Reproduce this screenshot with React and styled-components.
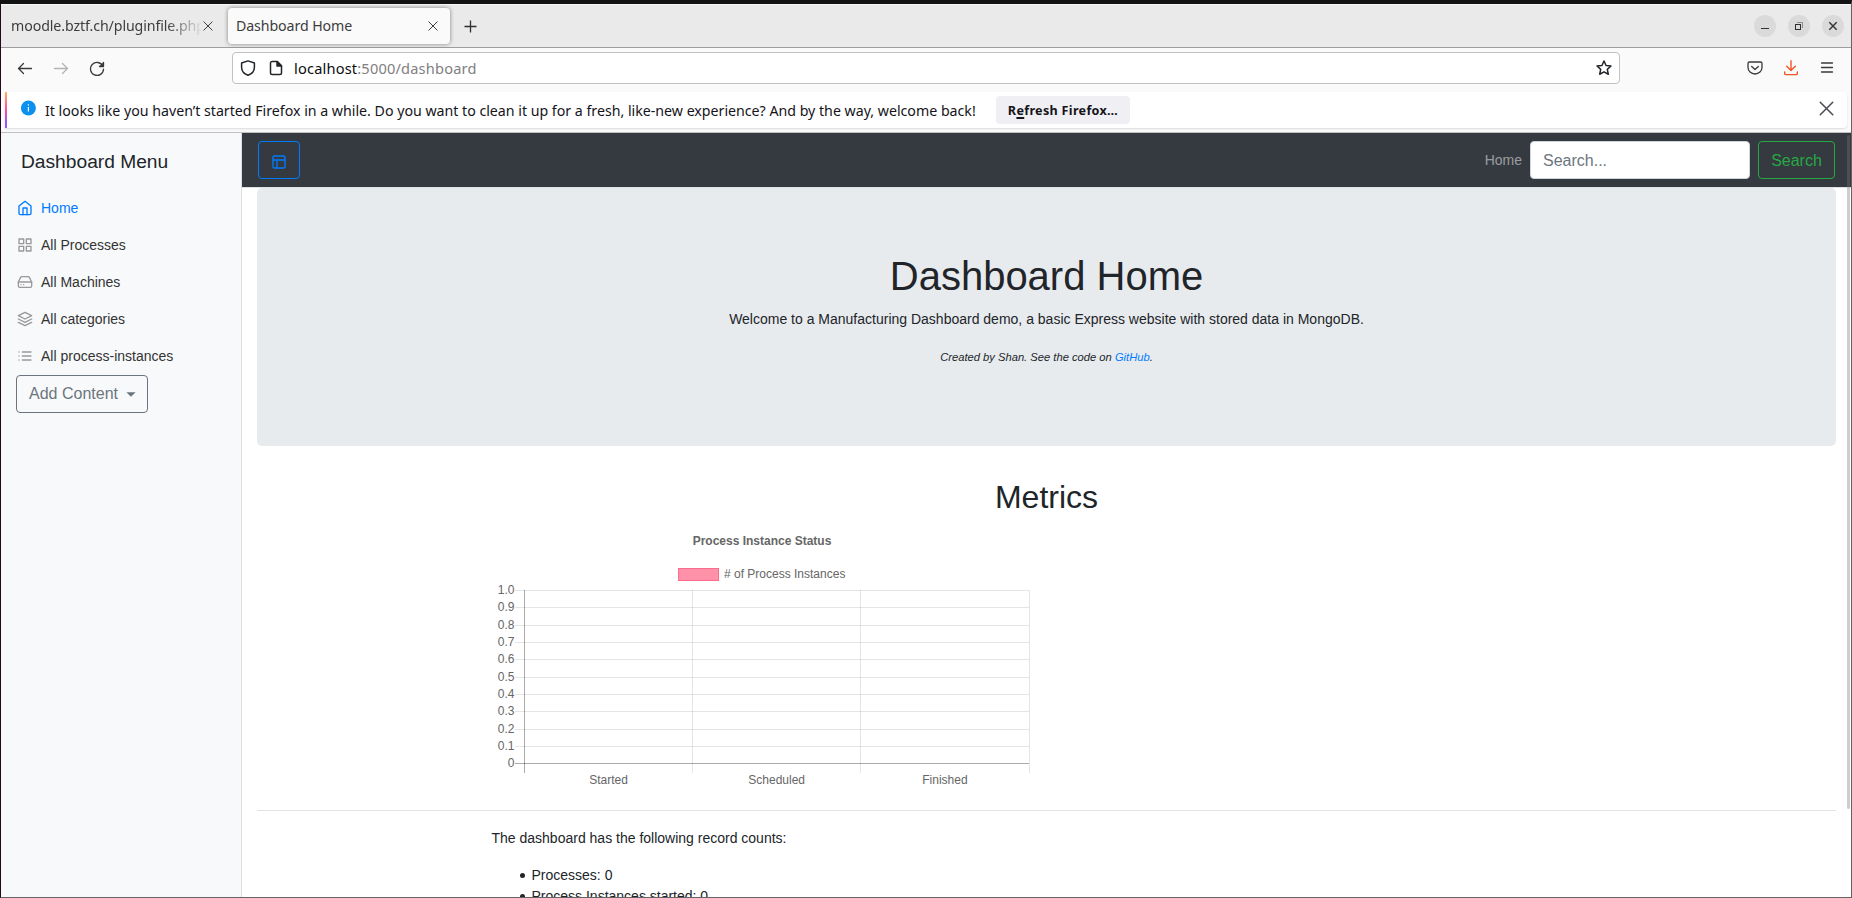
import React from "react";
import styled, { createGlobalStyle } from "styled-components";

const GlobalStyle = createGlobalStyle`
  *, *::before, *::after { box-sizing: border-box; }
  html, body { margin: 0; padding: 0; overflow: hidden; }
  body {
    font-family: "Liberation Sans", Arial, sans-serif;
    font-size: 14px;
    line-height: 1.5;
    color: #212529;
    background: #fff;
  }
`;

const uiFont = `"Noto Sans", "Open Sans", sans-serif`;

/* ---------- browser window ---------- */

const Window = styled.div`
  width: 1852px;
  height: 898px;
  overflow: hidden;
  display: flex;
  flex-direction: column;
  border-top: 4px solid #131313;
  border-left: 1px solid #1d0a1c;
  border-right: 1px solid #666365;
  border-bottom: 1px solid #666365;
`;

const TabBar = styled.div`
  flex: none;
  height: 44px;
  display: flex;
  align-items: center;
  background: #eaeaea;
  border-top: 1px solid #f8f8f8;
  border-bottom: 1px solid #9d9d9f;
  font-family: ${uiFont};
  color: #3d3d3d;
`;

const Tab = styled.div`
  display: flex;
  align-items: center;
  justify-content: space-between;
  height: 36px;
  width: ${(p) => p.$width}px;
  padding: 0 ${(p) => p.$right}px 0 ${(p) => p.$left}px;
  margin-right: ${(p) => p.$gap}px;
  border-radius: 4px;
  background: ${(p) => (p.$active ? "#fafafa" : "transparent")};
  box-shadow: ${(p) => (p.$active ? "0 0 4px rgba(0,0,0,.45)" : "none")};
`;

const TabTitle = styled.span`
  font-size: 14.2px;
  letter-spacing: ${(p) => p.$spacing || 0}px;
  white-space: nowrap;
  overflow: hidden;
  width: ${(p) => p.$width}px;
  ${(p) => p.$fade && "mask-image: linear-gradient(to right, #000 155px, transparent 192px);"}
`;

const WindowControls = styled.div`
  margin-left: auto;
  margin-right: 7px;
  display: flex;
  gap: 12px;
`;

const WindowButton = styled.span`
  width: 22px;
  height: 22px;
  border-radius: 50%;
  background: #dadada;
  display: flex;
`;

const NavBar = styled.div`
  flex: none;
  height: 44px;
  display: flex;
  align-items: center;
  padding: 0 16px 4px 16px;
  background: #fafafa;
  font-family: ${uiFont};
`;

const NavButtons = styled.div`
  display: flex;
  gap: 20px;
  width: 215px;
  color: #3a3a3a;
`;

const UrlField = styled.div`
  width: 1388px;
  height: 32px;
  display: flex;
  align-items: center;
  padding: 0 7px;
  background: #fff;
  border: 1px solid #c2c2c4;
  border-radius: 4px;
`;

const UrlIcons = styled.span`
  display: flex;
  gap: 12px;
`;

const UrlText = styled.span`
  flex: 1;
  margin-left: 10px;
  padding-top: 1px;
  font-size: 14.6px;
  letter-spacing: ${(p) => p.$spacing}px;
  color: #808080;
  b { font-weight: 400; color: #0c0c0d; }
`;

const NavTools = styled.div`
  margin-left: auto;
  display: flex;
  gap: 20px;
  color: #3a3a3a;
`;

const NoticeArea = styled.div`
  flex: none;
  height: 41px;
  padding: 0 4px 4px;
  background: #fafafa;
  border-bottom: 1px solid #bfbfbf;
`;

const Notice = styled.div`
  position: relative;
  height: 36px;
  display: flex;
  align-items: center;
  padding-left: 15px;
  padding-right: 13px;
  overflow: hidden;
  background: #fff;
  border-radius: 0 4px 4px 0;
  box-shadow: 0 1px 2px rgba(58, 57, 68, 0.15);
  font-family: ${uiFont};
  color: #15141a;
  &::before {
    content: "";
    position: absolute;
    left: 0;
    top: 0;
    bottom: 0;
    width: 2px;
    background: linear-gradient(#ffb055, #ff4aa2 50%, #9059ff 85%);
  }
`;

const InfoBadge = styled.span`
  display: flex;
  margin-top: -4px;
  margin-right: 9px;
`;

const NoticeText = styled.span`
  width: 951px;
  padding-top: 1px;
  font-size: 14.2px;
  letter-spacing: ${(p) => p.$spacing}px;
  white-space: nowrap;
`;

const NoticeButton = styled.button`
  height: 28px;
  width: 134px;
  padding: 0;
  border: 0;
  border-radius: 4px;
  background: #f0f0f4;
  color: #15141a;
  font: 700 12.6px ${uiFont};
  letter-spacing: ${(p) => p.$spacing}px;
  u { text-decoration-thickness: 2px; text-underline-offset: 2px; text-decoration-skip-ink: none; }
`;

const CloseNotice = styled.span`
  display: flex;
  margin-left: auto;
  margin-top: -4px;
`;

/* ---------- page ---------- */

const Page = styled.div`
  position: relative;
  flex: 1;
  min-height: 0;
  display: flex;
  overflow: hidden;
`;

const ScrollThumb = styled.div`
  position: absolute;
  right: 1px;
  top: 2px;
  width: 3px;
  height: 674px;
  border-radius: 2px;
  background: rgba(120, 120, 120, 0.37);
`;

const Sidebar = styled.aside`
  flex: none;
  width: 241px;
  background: #f8f9fb;
  border-right: 1px solid #dddde4;
`;

const Brand = styled.div`
  height: 57px;
  padding: 14px 20px 0;
  font-size: 19.2px;
  line-height: 29px;
`;

const SideLink = styled.a`
  display: flex;
  align-items: center;
  height: 37px;
  padding: 0 16px;
  gap: 8px;
  color: ${(p) => (p.$active ? "#007bff" : "#333")};
  svg {
    color: ${(p) => (p.$active ? "#007bff" : "#999")};
    margin-bottom: 1px;
  }
`;

const Button = styled.button`
  display: inline-flex;
  align-items: center;
  justify-content: center;
  height: 38px;
  width: ${(p) => p.$width}px;
  padding: ${(p) => p.$drop || 0}px 0 0;
  border: 1px solid ${(p) => p.$color};
  border-radius: 4px;
  background: transparent;
  color: ${(p) => p.$color};
  font: 16px "Liberation Sans", Arial, sans-serif;
`;

const AddButton = styled(Button)`
  margin-left: 15px;
  padding-left: 1px;
`;

const Caret = styled.span`
  margin-left: 8px;
  border-top: 5px solid;
  border-left: 5px solid transparent;
  border-right: 5px solid transparent;
  transform: scale(0.92);
`;

const Main = styled.main`
  flex: 1;
  min-width: 0;
`;

const TopNav = styled.nav`
  height: 55px;
  display: flex;
  align-items: center;
  padding: 0 16px;
  background: #343a40;
  border-bottom: 1px solid #dee2e6;
`;

const TopLink = styled.a`
  margin-left: auto;
  margin-right: 8px;
  color: rgba(255, 255, 255, 0.5);
`;

const SearchInput = styled.input`
  width: 220px;
  height: 38px;
  margin-right: 8px;
  padding: 7px 12px 6px;
  border: 1px solid #ced4da;
  border-radius: 4px;
  font: 16px "Liberation Sans", Arial, sans-serif;
  &::placeholder { color: #6c757d; opacity: 1; }
`;

const Content = styled.div`
  padding: 0 15px;
`;

const Jumbotron = styled.section`
  height: 258px;
  padding: 64px 32px;
  margin-bottom: 32px;
  border-radius: 5px;
  background: #e8ebee;
  text-align: center;
`;

const Title = styled.h1`
  margin: 0 0 9px;
  font-size: 40px;
  font-weight: 400;
  line-height: 48px;
`;

const Text = styled.p`
  margin: 0 0 16px;
`;

const Credit = styled.em`
  font-size: 11.2px;
  a { color: #007bff; }
`;

const SectionTitle = styled.h2`
  margin: 0 0 8px;
  font-size: 32px;
  font-weight: 400;
  line-height: 39px;
  text-align: center;
`;

const Column = styled.div`
  margin-left: ${(p) => p.$indent}px;
  width: 1110px;
`;

const ChartSvg = styled.svg`
  display: block;
  text { font-family: "Liberation Sans", Arial, sans-serif; font-size: 12px; fill: #666; }
`;

const ChartTitle = styled.text`
  font-weight: 700;
`;

const Divider = styled.hr`
  margin: 16px 0 17px;
  border: 0;
  border-top: 1px solid #e3e3e4;
`;

const Counts = styled.ul`
  margin: 0;
  padding-left: 40px;
  list-style: none;
`;

const Count = styled.li`
  position: relative;
  &::before {
    content: "";
    position: absolute;
    left: -12px;
    top: 8px;
    width: 5px;
    height: 5px;
    border-radius: 50%;
    background: #212529;
  }
`;

/* ---------- icons ---------- */

const Icon = ({ size = 16, box = 16, stroke = 1.3, children }) => (
  <svg width={size} height={size} viewBox={`0 0 ${box} ${box}`} fill="none" stroke="currentColor"
    strokeWidth={stroke} strokeLinecap="round" strokeLinejoin="round">{children}</svg>
);

const Feather = ({ children }) => <Icon box={24} stroke={2}>{children}</Icon>;

const CrossIcon = ({ size, color = "#3d3d3d" }) => (
  <svg width={size} height={size} viewBox="0 0 12 12" stroke={color} strokeWidth="1.2" strokeLinecap="round">
    <path d="M1 1l10 10M11 1L1 11" />
  </svg>
);

const sideLinks = [
  { label: "Home", active: true, icon: <><path d="M3 9l9-7 9 7v11a2 2 0 0 1-2 2H5a2 2 0 0 1-2-2z" /><path d="M9 22V12h6v10" /></> },
  { label: "All Processes", icon: <><rect x="3" y="3" width="7" height="7" /><rect x="14" y="3" width="7" height="7" /><rect x="14" y="14" width="7" height="7" /><rect x="3" y="14" width="7" height="7" /></> },
  { label: "All Machines", icon: <><path d="M22 12H2" /><path d="M5.45 5.11L2 12v6a2 2 0 0 0 2 2h16a2 2 0 0 0 2-2v-6l-3.45-6.89A2 2 0 0 0 16.76 4H7.24a2 2 0 0 0-1.79 1.11z" /><path d="M6 16h.01M10 16h.01" /></> },
  { label: "All categories", icon: <><path d="M12 2L2 7l10 5 10-5-10-5z" /><path d="M2 17l10 5 10-5" /><path d="M2 12l10 5 10-5" /></> },
  { label: "All process-instances", icon: <><path d="M8 6h13M8 12h13M8 18h13" /><path d="M3 6h.01M3 12h.01M3 18h.01" /></> },
];

/* ---------- chart ---------- */

const rows = ["1.0", "0.9", "0.8", "0.7", "0.6", "0.5", "0.4", "0.3", "0.2", "0.1", "0"];
const rowY = [65.5, 82.5, 100.5, 117.5, 134.5, 152.5, 169.5, 186.5, 204.5, 221.5, 238.5];
const colX = [32.5, 200.5, 368.5, 537.5];
const columns = ["Started", "Scheduled", "Finished"];

const Chart = () => (
  <ChartSvg width="540" height="269" viewBox="0 0 540 269">
    <ChartTitle x="270" y="20" textAnchor="middle">Process Instance Status</ChartTitle>
    <rect x="186.5" y="43.5" width="40" height="12" fill="#ff91a9" stroke="#ff6b8b" />
    <text x="232" y="53">
      # of Process Instances
    </text>
    {rowY.map((y, i) => (
      <path key={y} d={`M23 ${y}H537`} stroke={i === 10 ? "rgba(0,0,0,.33)" : "rgba(0,0,0,.1)"} />
    ))}
    {colX.map((x, i) => (
      <path key={x} d={`M${x} 65V248`} stroke={i === 0 ? "rgba(0,0,0,.33)" : "rgba(0,0,0,.1)"} />
    ))}
    {rows.map((r, i) => (
      <text key={r} x="22.5" y={rowY[i] + 3.5} textAnchor="end">{r}</text>
    ))}
    {columns.map((c, i) => (
      <text key={c} x={116.5 + i * 168.2} y="259" textAnchor="middle">{c}</text>
    ))}
  </ChartSvg>
);

export default function App() {
  return (
    <>
      <GlobalStyle />
      <Window>
        <TabBar>
          <Tab $width={218} $left={10} $right={6} $gap={9}>
            <TabTitle $width={191} $spacing={-0.1} $fade>moodle.bztf.ch/pluginfile.php</TabTitle>
            <CrossIcon size={10} />
          </Tab>
          <Tab $active $width={222} $left={8} $right={12} $gap={14}>
            <TabTitle $width={180} $spacing={-0.1}>Dashboard Home</TabTitle>
            <CrossIcon size={10} />
          </Tab>
          <svg width="13" height="13" viewBox="0 0 13 13" stroke="#2f2f2f" strokeWidth="1.3">
            <path d="M6.5 .5v12M.5 6.5h12" />
          </svg>
          <WindowControls>
            <WindowButton><svg width="22" height="22"><path d="M7 13.5h8" stroke="#333" /></svg></WindowButton>
            <WindowButton>
              <svg width="22" height="22" fill="none">
                <path d="M9 7.5h5.5V13" stroke="#8a8a8a" />
                <rect x="7.5" y="9.5" width="5" height="5" stroke="#2e2e2e" />
              </svg>
            </WindowButton>
            <WindowButton><svg width="22" height="22"><path d="M7.3 7.3l7.4 7.4M14.7 7.3l-7.4 7.4" stroke="#333" strokeWidth="1.4" /></svg></WindowButton>
          </WindowControls>
        </TabBar>

        <NavBar>
          <NavButtons>
            <Icon><path d="M14.5 8.500H1.500M6.500 3.500L1.500 8.500l5 5" /></Icon>
            <svg width="16" height="16" viewBox="0 0 16 16" fill="none" stroke="#b4b4b4" strokeWidth="1.3" strokeLinecap="round" strokeLinejoin="round">
              <path d="M1.5 8.500h13M9.500 3.500l5 5-5 5" />
            </svg>
            <Icon><path d="M13.800 6A6.500 6.500 0 1 0 14.500 9.200" /><path d="M14.500 2v4.500H10z" fill="currentColor" stroke="none" /><path d="M14.500 2.500v4H10.500" /></Icon>
          </NavButtons>
          <UrlField>
            <UrlIcons>
              <Icon stroke={1.5}><path d="M8 .9L1.600 3v4.300C1.600 11.200 4.500 14 8 15.200c3.500-1.200 6.400-4 6.400-7.900V3z" /></Icon>
              <Icon stroke={1.5}><path d="M9.300 1.500H4A1.500 1.500 0 0 0 2.500 3v10A1.500 1.500 0 0 0 4 14.500h8a1.500 1.500 0 0 0 1.500-1.500V5.700z" /><path d="M9 1.500v4.500h4.500z" fill="currentColor" /></Icon>
            </UrlIcons>
            <UrlText $spacing={0.18}><b>localhost</b>:5000/dashboard</UrlText>
            <Icon stroke={1.5}><path d="M8 1l2.050 4.500 4.900.55-3.650 3.300 1 4.900L8 11.800l-4.300 2.450 1-4.900L1.050 6.050l4.900-.55z" /></Icon>
          </UrlField>
          <NavTools>
            <Icon><path d="M2.500 2h11A1.500 1.500 0 0 1 15 3.500V7.500a7 6.500 0 0 1-14 0v-4A1.500 1.500 0 0 1 2.500 2z" /><path d="M4.700 6.500L8 9.500l3.300-3" /></Icon>
            <svg width="16" height="16" viewBox="0 0 16 16" fill="none" stroke="#f05423" strokeWidth="1.4" strokeLinecap="round" strokeLinejoin="round">
              <path d="M8 .7v9.500M3.700 6.300L8 10.500l4.300-4.200M1.700 12v1.400a1.200 1.200 0 0 0 1.200 1.200h10.200a1.200 1.200 0 0 0 1.200-1.200V12" />
            </svg>
            <Icon><path d="M2.500 3h11M2.500 7.500h11M2.500 12h11" /></Icon>
          </NavTools>
        </NavBar>

        <NoticeArea>
          <Notice>
            <InfoBadge>
              <svg width="16" height="16" viewBox="0 0 16 16">
                <circle cx="8.400" cy="8" r="7.500" fill="#0a90ee" />
                <path d="M8.400 4.200v1.300M8.400 7v4.500" stroke="#fff" strokeWidth="1.200" />
              </svg>
            </InfoBadge>
            <NoticeText $spacing={-0.008}>
              It looks like you haven’t started Firefox in a while. Do you want to clean it up for a fresh, like-new experience? And by the way, welcome back!
            </NoticeText>
            <NoticeButton $spacing={0.3}>R<u>e</u>fresh Firefox…</NoticeButton>
            <CloseNotice><CrossIcon size={15} color="#4a4a55" /></CloseNotice>
          </Notice>
        </NoticeArea>

        <Page>
          <Sidebar>
            <Brand>Dashboard Menu</Brand>
            {sideLinks.map((l) => (
              <SideLink key={l.label} $active={l.active}>
                <Feather>{l.icon}</Feather>
                {l.label}
              </SideLink>
            ))}
            <AddButton $width={132} $color="#6c757d">Add Content<Caret /></AddButton>
          </Sidebar>
          <Main>
            <TopNav>
              <Button $width={42} $color="#007bff" $drop={4}>
                <Feather><rect x="3" y="3" width="18" height="18" rx="2" /><path d="M3 9h18M9 21V9" /></Feather>
              </Button>
              <TopLink>Home</TopLink>
              <SearchInput placeholder="Search..." />
              <Button $width={77} $color="#28a745" $drop={1}>Search</Button>
            </TopNav>
            <Content>
              <Jumbotron>
                <Title>Dashboard Home</Title>
                <Text>Welcome to a Manufacturing Dashboard demo, a basic Express website with stored data in MongoDB.</Text>
                <Text><Credit>Created by Shan. See the code on <a>GitHub</a>.</Credit></Text>
              </Jumbotron>
              <SectionTitle>Metrics</SectionTitle>
              <Column $indent={235}><Chart /></Column>
              <Divider />
              <Column $indent={234.5}>
                <Text>The dashboard has the following record counts:</Text>
                <Counts>
                  <Count>Processes: 0</Count>
                  <Count>Process Instances started: 0</Count>
                </Counts>
              </Column>
            </Content>
          </Main>
          <ScrollThumb />
        </Page>
      </Window>
    </>
  );
}
